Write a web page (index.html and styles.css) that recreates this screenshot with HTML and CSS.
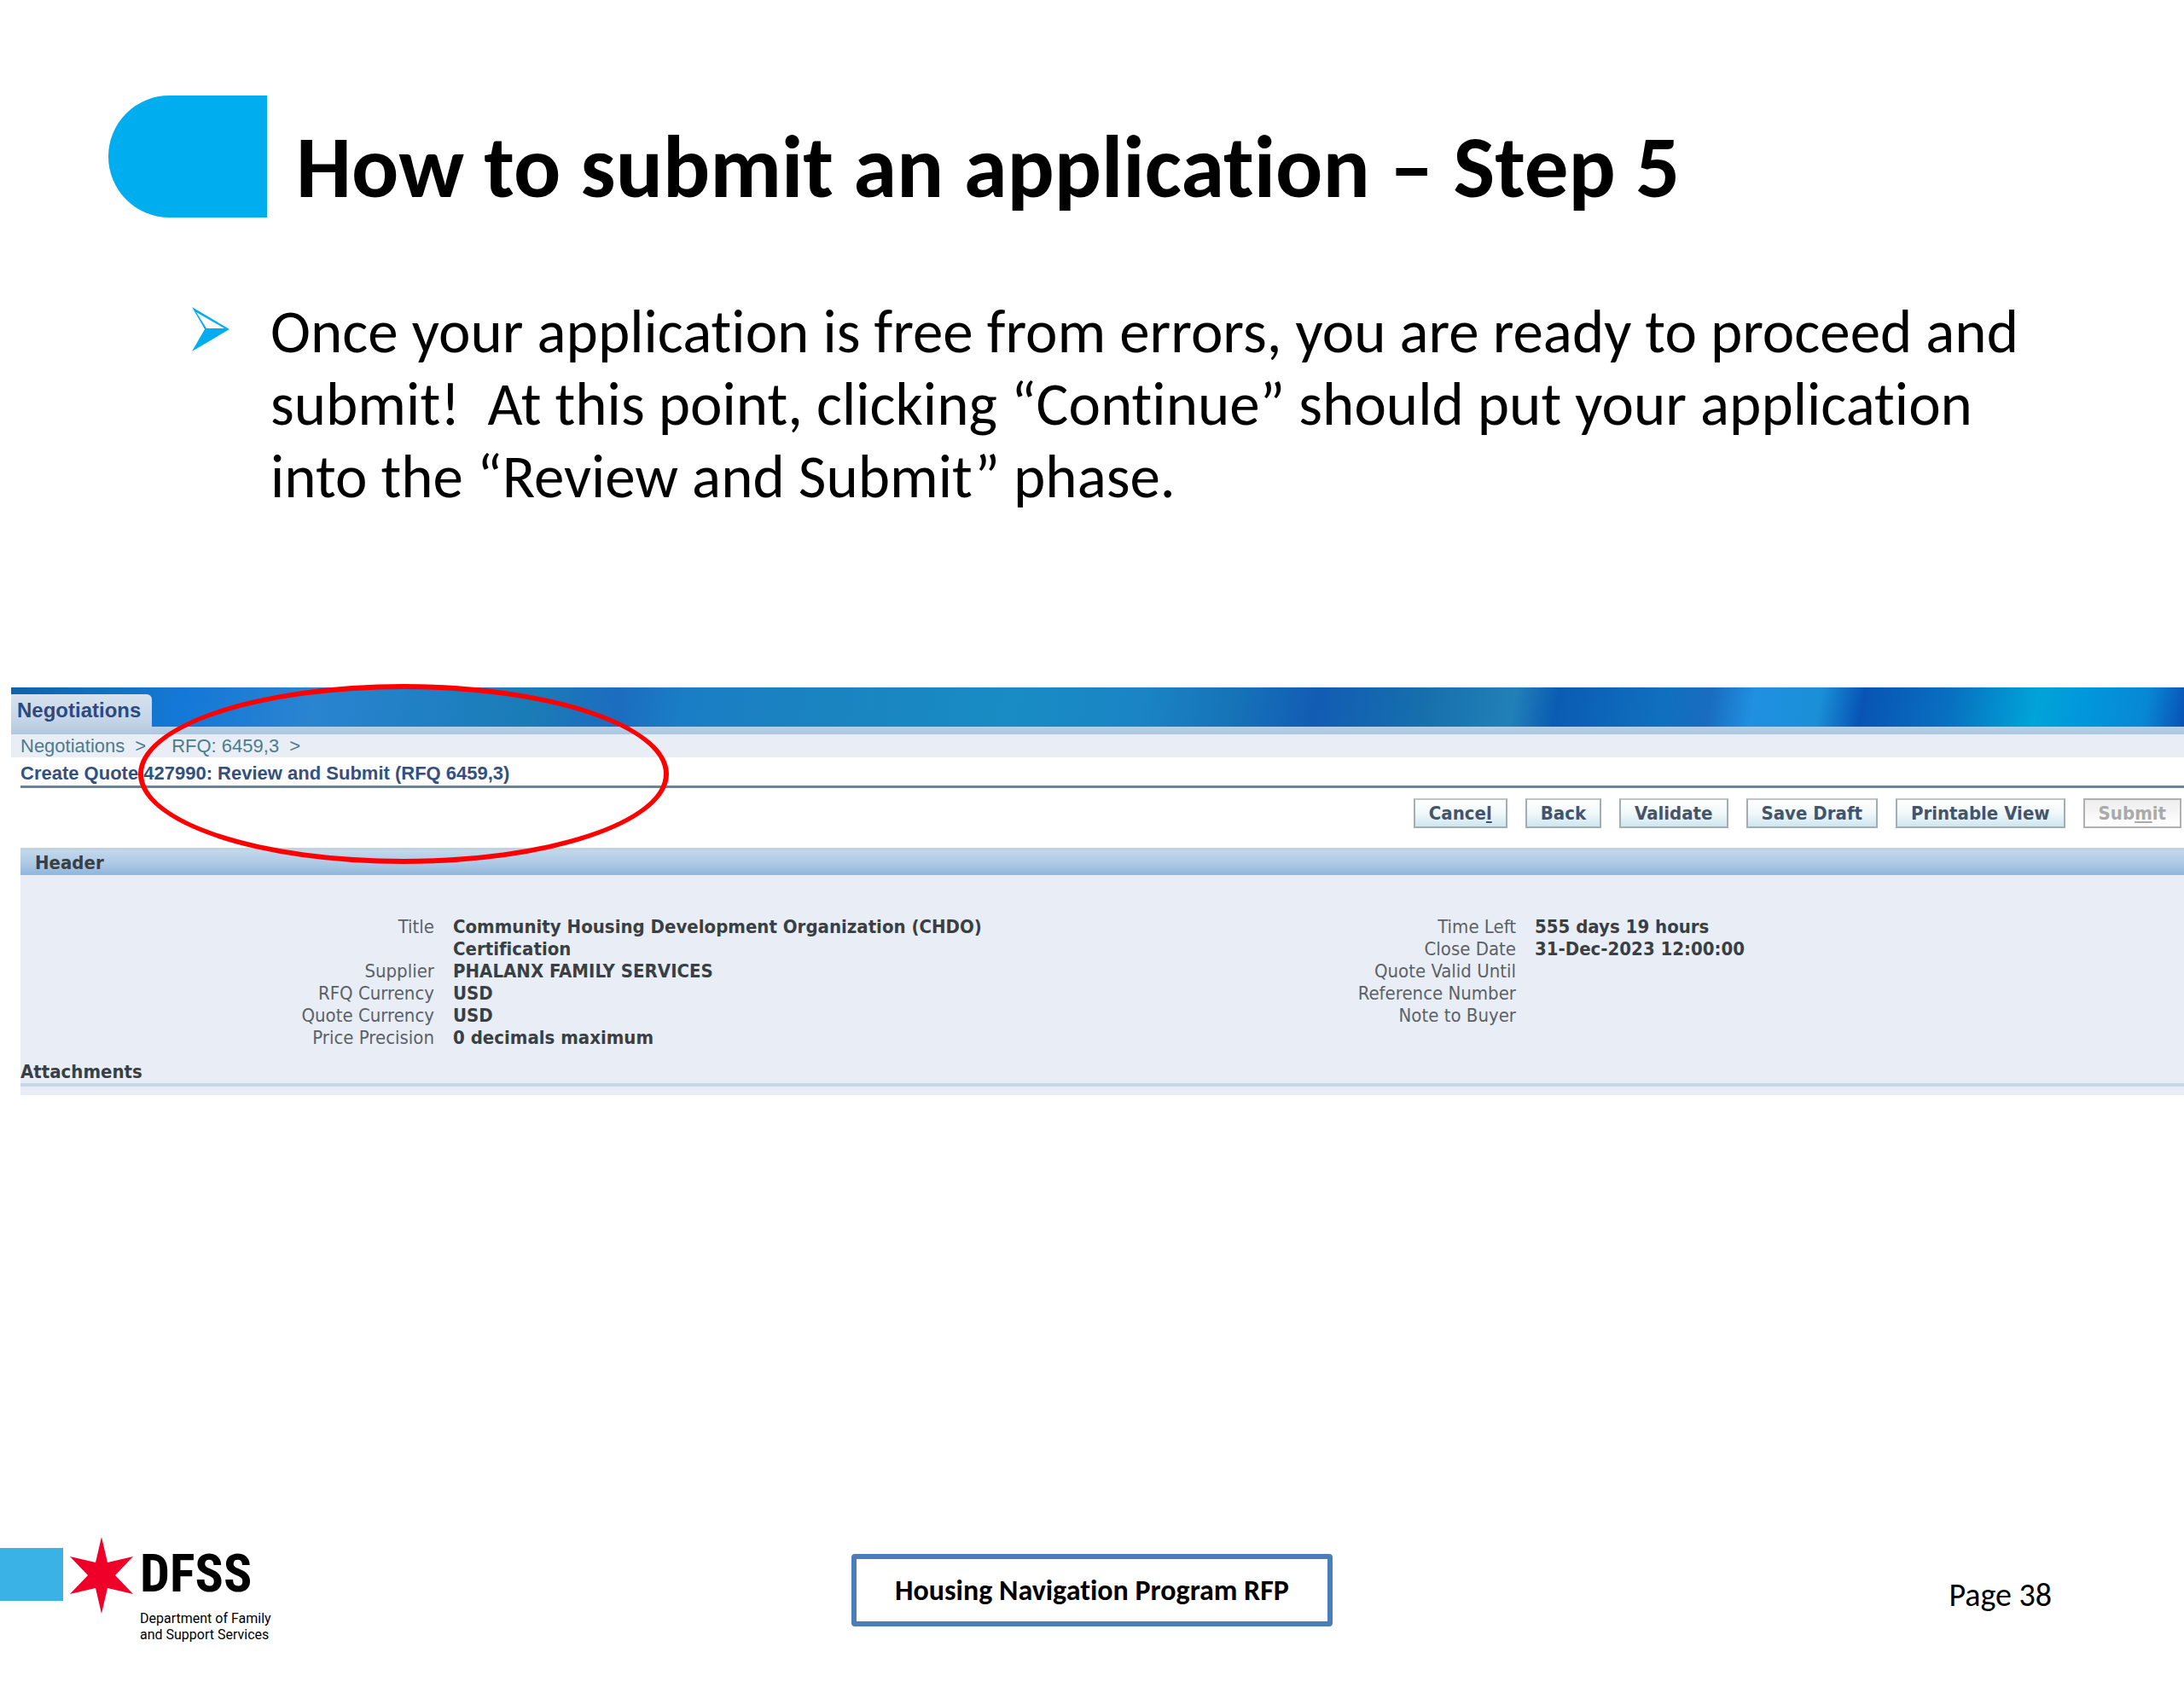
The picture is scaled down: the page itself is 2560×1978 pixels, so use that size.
FILE: index.html
```html
<!DOCTYPE html>
<html lang="en">
<head>
    <meta charset="utf-8">
    <title>How to submit an application – Step 5</title>
    <link rel="stylesheet" href="styles.css">
</head>
<body>
    <div class="slide">
        <header class="slide-header">
            <div class="marker"></div>
            <h1>How to submit an application – Step 5</h1>
        </header>

        <ul class="points">
            <li>
                <svg class="arrow" viewBox="0 0 44 52">
                    <path d="M0 0 L44 26 L0 52 L15 26 Z" fill="#00aeef"/>
                    <path d="M5 6 L38 25 L17 25 Z" fill="#fff"/>
                </svg>
                <p>Once your application is free from errors, you are ready to proceed and<br>submit!&nbsp; At this point, clicking “Continue” should put your application<br>into the “Review and Submit” phase.</p>
            </li>
        </ul>

        <section class="capture">
            <nav class="banner">
                <a class="tab" href="#">Negotiations</a>
            </nav>
            <nav class="crumbs">
                <a href="#">Negotiations</a><span>&gt;</span>
                <a class="rfq" href="#">RFQ: 6459,3</a><span>&gt;</span>
            </nav>
            <h2 class="quote-title">Create Quote 427990: Review and Submit (RFQ 6459,3)</h2>
            <div class="actions">
                <button type="button">Cance<u>l</u></button>
                <button type="button">Back</button>
                <button type="button">Validate</button>
                <button type="button">Save Draft</button>
                <button type="button">Printable View</button>
                <button type="button" disabled>Sub<u>m</u>it</button>
            </div>
            <div class="panel">
                <h3 class="panel-title">Header</h3>
                <div class="details">
                    <dl>
                        <dt>Title</dt>
                        <dd>Community Housing Development Organization (CHDO)<br>Certification</dd>
                        <dt>Supplier</dt>
                        <dd>PHALANX FAMILY SERVICES</dd>
                        <dt>RFQ Currency</dt>
                        <dd>USD</dd>
                        <dt>Quote Currency</dt>
                        <dd>USD</dd>
                        <dt>Price Precision</dt>
                        <dd>0 decimals maximum</dd>
                    </dl>
                    <dl>
                        <dt>Time Left</dt>
                        <dd>555 days 19 hours</dd>
                        <dt>Close Date</dt>
                        <dd>31-Dec-2023 12:00:00</dd>
                        <dt>Quote Valid Until</dt>
                        <dd></dd>
                        <dt>Reference Number</dt>
                        <dd></dd>
                        <dt>Note to Buyer</dt>
                        <dd></dd>
                    </dl>
                </div>
                <h3 class="attachments">Attachments</h3>
            </div>
            <div class="circle"></div>
        </section>

        <footer class="slide-footer">
            <div class="logo">
                <div class="logo-bar"></div>
                <svg class="star" viewBox="0 0 74 90">
                    <path d="M37 0 L44 30 L74 23 L53 45 L74 67 L44 60 L37 90 L30 60 L0 67 L21 45 L0 23 L30 30 Z" fill="#ef0029"/>
                </svg>
                <div class="logo-text">
                    <strong>DFSS</strong>
                    <span>Department of Family<br>and Support Services</span>
                </div>
            </div>
            <div class="program">Housing Navigation Program RFP</div>
            <div class="page">Page 38</div>
        </footer>
    </div>
</body>
</html>
```

FILE: styles.css
```css
* {
    box-sizing: border-box;
}

body {
    margin: 0;
    background-color: #fff;
    color: #000;
    font-family: Carlito, Lato, sans-serif;
    font-variant-ligatures: none;
}

h1, h2, h3, p, ul, dl, dd {
    margin: 0;
    padding: 0;
}

a {
    color: inherit;
    text-decoration: none;
}

.slide {
    display: flex;
    flex-direction: column;
    min-height: 100vh;
    overflow: hidden;
}

/* Title */
.slide-header {
    display: flex;
    gap: 34px;
    padding: 112px 127px 0;
}

.marker {
    width: 186px;
    height: 143px;
    background-color: #00aeef;
    border-radius: 72px 0 0 72px;
}

h1 {
    padding-top: 24px;
    font-size: 103px;
    line-height: 120px;
}

.points {
    margin-top: 90px;
    padding-left: 225px;
    list-style: none;
}

.points li {
    display: flex;
    gap: 48px;
    font-size: 71px;
    line-height: 85px;
}

.points p {
    white-space: nowrap;
}

.arrow {
    flex: none;
    width: 44px;
    height: 52px;
    margin-top: 14px;
}

/* Application window */
.capture {
    position: relative;
    margin: 205px 0 0 13px;
    font-family: "Liberation Sans", sans-serif;
}

.banner {
    display: flex;
    padding-top: 8px;
    height: 55px;
    background:
        linear-gradient(#b4d0ea, #adc6dd) bottom / 100% 9px no-repeat,
        linear-gradient(100deg, #0a64ae 0%, #1273c4 5%, #1478d8 8%, #2a84d0 14%, #2080c4 19%, #1a7cb6 24%, #1c6cc0 28%, #1a7ec6 31%, #1a82c0 36%, #188cc4 46%, #1a84c4 52%, #1674b8 56%, #125cb4 60%, #1670ac 65%, #2280b8 69%, #0a5cb2 71%, #1070c0 76%, #1a6cc0 78%, #2090e0 80%, #1a90d8 83%, #0854b4 85%, #0870c0 89%, #00a4d8 93%, #0098dc 95%, #0888d4 98%, #0850b4 100%);
}

.tab {
    padding: 0 13px 0 7px;
    background: linear-gradient(#d6e2ee, #c6d6e8 60%, #b2c8e0);
    border-top-right-radius: 6px;
    color: #2d4a80;
    font-size: 24px;
    font-weight: bold;
    line-height: 38px;
}

.crumbs {
    display: flex;
    gap: 12px;
    padding-left: 11px;
    background-color: #e9eef6;
    color: #4c7c8c;
    font-size: 22px;
    line-height: 27px;
}

.rfq {
    margin-left: 18px;
}

.quote-title {
    margin-left: 11px;
    padding-top: 5px;
    border-bottom: 3px solid #6b8299;
    color: #33507f;
    font-size: 22px;
    line-height: 28px;
}

.actions {
    display: flex;
    justify-content: flex-end;
    gap: 21px;
    padding: 12px 3px 23px;
}

button {
    height: 35px;
    padding: 0 16px;
    border: 2px solid #a3adb5;
    border-top-color: #c0c4c6;
    background: linear-gradient(#fff, #f0f8fa 50%, #cfe6ee);
    color: #44546a;
    font-family: "DejaVu Sans Condensed", "DejaVu Sans", sans-serif;
    font-size: 22px;
    font-weight: bold;
    line-height: 30px;
}

button:disabled {
    background: linear-gradient(#eee, #fff);
    border-color: #b0b0b0;
    color: #aaa;
}

.panel {
    margin-left: 11px;
    padding-bottom: 10px;
    background-color: #e9eef6;
    color: #3a3f44;
    font-family: "DejaVu Sans Condensed", "DejaVu Sans", sans-serif;
    font-size: 22px;
}

.panel-title {
    padding-left: 17px;
    border-top: 3px solid #c3d3de;
    background: linear-gradient(#c2d8ec, #aecae6 50%, #8fb6d9);
    font-size: 22px;
    line-height: 29px;
}

.details {
    display: grid;
    grid-template-columns: 1fr 1fr;
    padding: 48px 0 14px;
}

dl {
    display: grid;
    grid-template-columns: 485px 1fr;
    column-gap: 22px;
    align-content: start;
    line-height: 26px;
}

dt {
    color: #5c6166;
    text-align: right;
}

dd {
    font-weight: bold;
}

.attachments {
    border-bottom: 4px solid #c8d7e8;
    font-size: 22px;
    line-height: 26px;
}

/* Ring drawn over the window */
.circle {
    position: absolute;
    top: -4px;
    left: 149px;
    width: 622px;
    height: 211px;
    border: 6px solid #f00;
    border-radius: 50%;
}

/* Footer */
.slide-footer {
    display: grid;
    grid-template-columns: 1fr auto 1fr;
    align-items: center;
    margin-top: auto;
    padding-bottom: 52px;
}

.logo {
    display: flex;
    align-items: flex-start;
    gap: 8px;
}

.logo-bar {
    width: 74px;
    height: 62px;
    margin-top: 13px;
    background-color: #3bb2e6;
}

.star {
    width: 74px;
    height: 90px;
}

.logo-text {
    font-family: Roboto, sans-serif;
    font-size: 16px;
    line-height: 19px;
}

.logo-text strong {
    display: block;
    font-family: "Roboto Condensed", "Liberation Sans Narrow", Roboto, sans-serif;
    font-size: 62px;
    line-height: 86px;
}

.program {
    padding: 0 45px;
    border: 6px solid #4a7ebb;
    border-radius: 4px;
    font-size: 34px;
    font-weight: bold;
    line-height: 73px;
}

.page {
    padding: 12px 155px 0 0;
    font-size: 38px;
    text-align: right;
}
```
